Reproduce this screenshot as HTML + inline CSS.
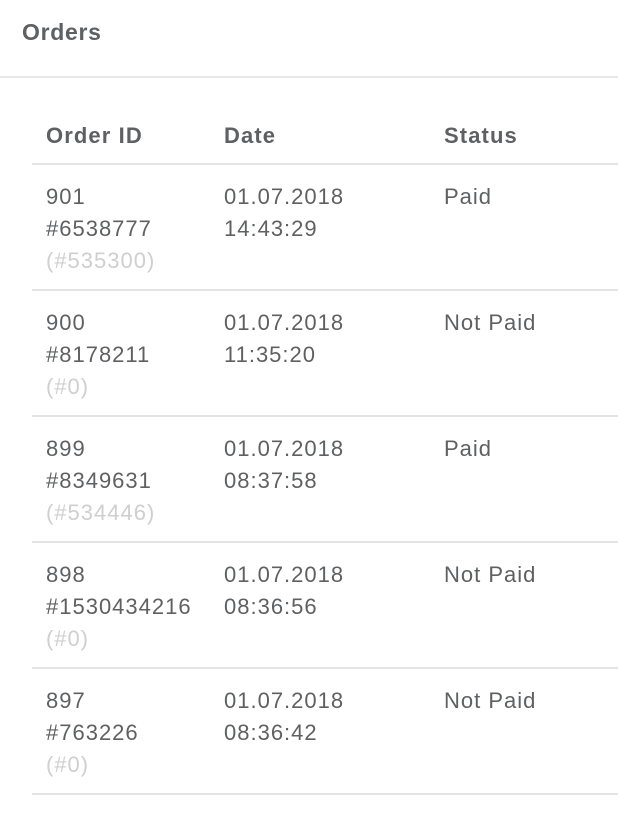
<!DOCTYPE html>
<html><head><style>
body{margin:0;width:618px;height:818px;background:#fff;font-family:"Liberation Sans",sans-serif;color:#5f6062;overflow:hidden;position:relative}
.t{position:absolute;left:22px;top:19px;font-size:23px;letter-spacing:0.7px;font-weight:bold;color:#5f6062}
.hr{position:absolute;left:0;right:0;top:76px;height:2px;background:#e8e8e8}
.line{position:absolute;left:32px;right:0;height:2px;background:#e3e3e3}
.c{position:absolute;font-size:22px;letter-spacing:1px;line-height:32px;white-space:nowrap}
.h{font-weight:bold;font-size:22px;letter-spacing:1.1px}
.g{color:#cfcfcf}
</style></head><body>
<div class="t">Orders</div>
<div class="hr"></div>
<div class="c h" style="left:46px;top:120px">Order ID</div>
<div class="c h" style="left:224px;top:120px">Date</div>
<div class="c h" style="left:444px;top:120px">Status</div>
<div class="line" style="top:163px"></div>

<div class="c" style="left:46px;top:181px">901<br>#6538777<br><span class="g">(#535300)</span></div>
<div class="c" style="left:224px;top:181px">01.07.2018<br>14:43:29</div>
<div class="c" style="left:444px;top:181px">Paid</div>
<div class="line" style="top:289px"></div>

<div class="c" style="left:46px;top:307px">900<br>#8178211<br><span class="g">(#0)</span></div>
<div class="c" style="left:224px;top:307px">01.07.2018<br>11:35:20</div>
<div class="c" style="left:444px;top:307px">Not Paid</div>
<div class="line" style="top:415px"></div>

<div class="c" style="left:46px;top:433px">899<br>#8349631<br><span class="g">(#534446)</span></div>
<div class="c" style="left:224px;top:433px">01.07.2018<br>08:37:58</div>
<div class="c" style="left:444px;top:433px">Paid</div>
<div class="line" style="top:541px"></div>

<div class="c" style="left:46px;top:559px">898<br>#1530434216<br><span class="g">(#0)</span></div>
<div class="c" style="left:224px;top:559px">01.07.2018<br>08:36:56</div>
<div class="c" style="left:444px;top:559px">Not Paid</div>
<div class="line" style="top:667px"></div>

<div class="c" style="left:46px;top:685px">897<br>#763226<br><span class="g">(#0)</span></div>
<div class="c" style="left:224px;top:685px">01.07.2018<br>08:36:42</div>
<div class="c" style="left:444px;top:685px">Not Paid</div>
<div class="line" style="top:793px"></div>
</body></html>
